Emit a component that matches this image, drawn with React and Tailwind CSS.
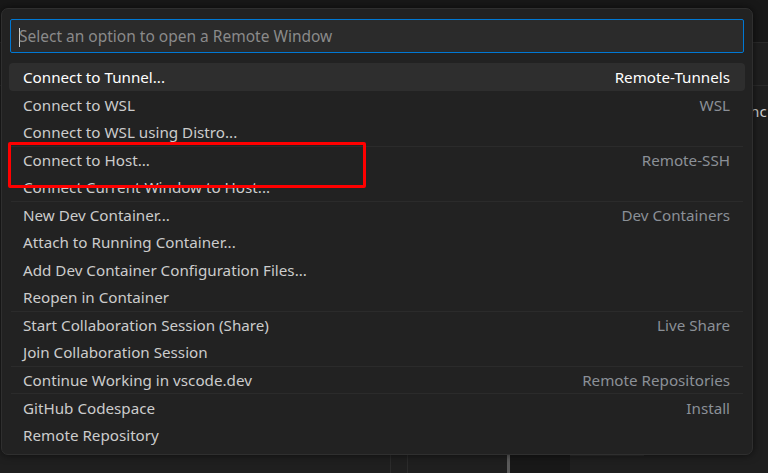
import React from 'react';

const groups = [
  [
    { label: 'Connect to Tunnel...', desc: 'Remote-Tunnels', active: true },
    { label: 'Connect to WSL', desc: 'WSL' },
    { label: 'Connect to WSL using Distro...' },
  ],
  [
    { label: 'Connect to Host...', desc: 'Remote-SSH' },
    { label: 'Connect Current Window to Host...' },
  ],
  [
    { label: 'New Dev Container...', desc: 'Dev Containers' },
    { label: 'Attach to Running Container...' },
    { label: 'Add Dev Container Configuration Files...' },
    { label: 'Reopen in Container' },
  ],
  [
    { label: 'Start Collaboration Session (Share)', desc: 'Live Share' },
    { label: 'Join Collaboration Session' },
  ],
  [{ label: 'Continue Working in vscode.dev', desc: 'Remote Repositories' }],
  [
    { label: 'GitHub Codespace', desc: 'Install' },
    { label: 'Remote Repository' },
  ],
];

const Row = ({ item, first }) => (
  <div className={`relative h-[27.5px] ${first ? 'border-t border-[#2b2b2b]' : ''}`}>
    <div
      className={`absolute inset-x-[-2px] top-0 bottom-0 flex items-center justify-between pt-[2px] pl-[14px] pr-[15px] rounded-[4px] ${
        item.active ? 'bg-[#2e2e2e] text-white' : 'text-[#cccccc]'
      }`}
    >
      <span>{item.label}</span>
      {item.desc && (
        <span className={item.active ? 'text-white' : 'text-[#8b9097]'}>{item.desc}</span>
      )}
    </div>
  </div>
);

const App = () => {
  return (
    <div
      className="relative w-[768px] h-[473px] overflow-hidden bg-[#1f1f1f] text-[15.2px]"
      style={{ fontFamily: '"Noto Sans", "Open Sans", sans-serif' }}
    >
      {/* Editor behind the picker */}
      <div className="flex flex-col h-full">
        <div className="h-[43px] bg-[#181818] border-b border-[#2b2b2b]" />
        <div className="h-[43px] bg-[#1f1f1f] border-b border-[#2b2b2b]" />
        <div className="flex-1 pt-[14px] pl-[750px]">
          <span className="text-[#cccccc]">nc</span>
        </div>
        <div className="h-[18px] flex">
          <div className="w-[390px]" />
          <div className="w-[17px] border-l border-[#2b2b2b]" />
          <div className="w-[100px] border-l border-[#2b2b2b]" />
          <div className="w-[3px] bg-[#5a5a5a]" />
          <div className="w-[60px] bg-[#181818]" />
          <div className="w-[74px] border-t border-[#2b2b2b]" />
        </div>
      </div>

      {/* Quick pick */}
      <div className="absolute left-[1px] top-[8px] w-[752px] h-[447px] bg-[#222222] border border-[#2f2f2f] rounded-[7px] shadow-[0_0_8px_rgba(0,0,0,0.6)] px-[8px] pt-[10px]">
        <div className="h-[34px] border border-[#0078d4] rounded-[2px] bg-[#2b2b2b] flex items-center pt-[2px] pl-[8px] text-[#8a8a8a] text-[15.5px]">
          <span className="w-[1px] h-[19px] bg-[#cccccc] mr-[-1px]" />
          <span>Select an option to open a Remote Window</span>
        </div>
        <div className="mt-[10px] px-[1px]">
          {groups.map((g, gi) => (
            <div key={gi}>
              {g.map((item, i) => (
                <Row key={i} item={item} first={gi > 0 && i === 0} />
              ))}
            </div>
          ))}
        </div>
      </div>

      {/* Annotation */}
      <div className="absolute left-[8px] top-[142px] w-[358px] h-[46px] border-[3px] border-[#ff0000] rounded-[2px]" />
    </div>
  );
};

export default App;
